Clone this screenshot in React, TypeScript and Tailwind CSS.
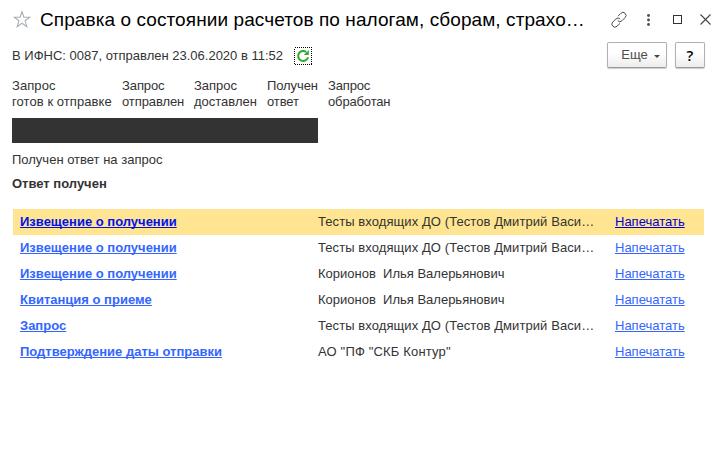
const steps = [
  { top: 'Запрос', bottom: 'готов к отправке', width: 'w-[110px]', tracking: 'tracking-[0.07px]' },
  { top: 'Запрос', bottom: 'отправлен', width: 'w-[72px]', tracking: 'tracking-[-0.1px]' },
  { top: 'Запрос', bottom: 'доставлен', width: 'w-[73px]', tracking: 'tracking-normal' },
  { top: 'Получен', bottom: 'ответ', width: 'w-[61px]', tracking: 'tracking-[-0.1px]' },
  { top: 'Запрос', bottom: 'обработан', width: 'w-[80px]', tracking: 'tracking-[-0.15px]' },
];

const rows = [
  { name: 'Извещение о получении', from: 'Тесты входящих ДО (Тестов Дмитрий Васи…', active: true },
  { name: 'Извещение о получении', from: 'Тесты входящих ДО (Тестов Дмитрий Васи…', active: false },
  { name: 'Извещение о получении', from: 'Корионов  Илья Валерьянович', active: false },
  { name: 'Квитанция о приеме', from: 'Корионов  Илья Валерьянович', active: false },
  { name: 'Запрос', from: 'Тесты входящих ДО (Тестов Дмитрий Васи…', active: false },
  { name: 'Подтверждение даты отправки', from: 'АО "ПФ "СКБ Контур"', active: false },
];

function TitleBar() {
  return (
    <header className="flex h-10 items-center pl-[13px]">
      <svg className="mb-[2px] size-[18px] shrink-0" viewBox="0 0 18 18" fill="none" stroke="#a9afb8" strokeWidth="1.1">
        <path d="M9 1.7 L10.9 7.2 H16.8 L12.1 10.8 L13.8 16.6 L9 13.2 L4.2 16.6 L5.9 10.8 L1.2 7.2 H7.1 Z" />
      </svg>
      <h1 className="ml-[9px] w-[560px] shrink-0 whitespace-nowrap text-[19px] leading-6 tracking-[0.085px] text-black">
        Справка о состоянии расчетов по налогам, сборам, страхо…
      </h1>
      <svg className="mb-px ml-[10px] size-[18px] shrink-0" viewBox="0 0 18 18" fill="none" stroke="#4d4d4d">
        <path d="M8 5.2 L10.8 2.4 a2.9 2.9 0 0 1 4.3 0 a2.9 2.9 0 0 1 0 4.2 L12 9.7 a2.9 2.9 0 0 1 -4.2 0" />
        <path d="M10 12.4 L7 15.2 a2.9 2.9 0 0 1 -4.2 0 a2.9 2.9 0 0 1 0 -4.2 L5.9 8 a2.9 2.9 0 0 1 4.2 0" />
      </svg>
      <svg className="mb-px ml-[19px] h-3 w-[3px] shrink-0" viewBox="0 0 3 12" fill="#4d4d4d">
        <circle cx="1.5" cy="1.5" r="1.45" />
        <circle cx="1.5" cy="6" r="1.45" />
        <circle cx="1.5" cy="10.5" r="1.45" />
      </svg>
      <span className="mb-px ml-[23px] size-[9px] shrink-0 border border-[#333]" />
      <svg className="mb-[2px] ml-[18px] size-[11px] shrink-0" viewBox="0 0 11 11" stroke="#444" strokeWidth="1.1">
        <path d="M.5 .5 L10.5 10.5 M10.5 .5 L.5 10.5" />
      </svg>
    </header>
  );
}

function Toolbar() {
  return (
    <div className="flex h-[30px] items-center pl-3">
      <span className="w-[282px] whitespace-nowrap pt-[2px]">В ИФНС: 0087, отправлен 23.06.2020 в 11:52</span>
      <svg className="mt-[2px] size-[18px]" viewBox="0 0 18 18" fill="none">
        <rect x=".5" y=".5" width="17" height="17" stroke="#000" strokeDasharray="1 1" shapeRendering="crispEdges" />
        <path d="M12.2 5 A5 5 0 1 0 14 10.2" stroke="#2fa832" strokeWidth="2" />
        <path d="M14.8 3 V8 H9.8 Z" fill="#2fa832" />
      </svg>
      <button className="ml-[295px] flex h-[26px] w-[60px] items-center rounded-[2px] border border-[#b0b0b0] border-b-[#999] bg-linear-to-b from-white from-40% to-[#ededed] pl-[13px] text-[#4d4d4d] shadow-[0_1px_1px_#ccc]">
        <span className="w-[27px]">Еще</span>
        <svg className="mt-[3px] ml-[6px] h-[3px] w-[6px]" viewBox="0 0 6 3" fill="#444"><path d="M0 0 H6 L3 3 Z" /></svg>
      </button>
      <button className="ml-2 flex h-[26px] w-[30px] items-center justify-center rounded-[2px] border border-[#b0b0b0] border-b-[#999] bg-linear-to-b from-white from-40% to-[#ededed] font-['Open_Sans','Noto_Sans',sans-serif] text-[15px] font-semibold text-black shadow-[0_1px_1px_#ccc]">
        ?
      </button>
    </div>
  );
}

export default function App() {
  return (
    <main className="h-[462px] w-[726px] overflow-hidden bg-white font-['Liberation_Sans',Arial,sans-serif] text-[13px] leading-4 text-[#333]">
      <TitleBar />
      <Toolbar />
      <div className="mt-2 flex whitespace-nowrap pl-3">
        {steps.map((s) => (
          <div key={s.bottom} className={`${s.width} ${s.tracking}`}>
            <div>{s.top}</div>
            <div>{s.bottom}</div>
          </div>
        ))}
      </div>
      <div className="mt-2 ml-3 h-[25px] w-[306px] bg-[#333]" />
      <p className="mt-[9px] ml-3">Получен ответ на запрос</p>
      <p className="mt-2 ml-3 font-bold">Ответ получен</p>
      <div className="mt-[17px] ml-[13px] w-[691px]">
        {rows.map((r, i) => (
          <div key={i} className={`flex h-[26px] items-center whitespace-pre pl-[7px] ${r.active ? 'bg-[#ffe591]' : ''}`}>
            <a className={`font-bold underline underline-offset-1 [text-decoration-skip-ink:none] ${r.active ? 'text-[#0011f0]' : 'text-[#3366ff]'}`}>{r.name}</a>
            <span className={`ml-auto w-[297px] ${r.from.startsWith('К') ? '' : r.from.startsWith('А') ? 'tracking-[0.17px]' : 'tracking-[0.08px]'}`}>{r.from}</span>
            <span className="w-[89px]">
              <a className={`underline underline-offset-1 [text-decoration-skip-ink:none] ${r.active ? 'text-[#0000d8]' : 'text-[#3366ff]'}`}>Напечатать</a>
            </span>
          </div>
        ))}
      </div>
    </main>
  );
}
